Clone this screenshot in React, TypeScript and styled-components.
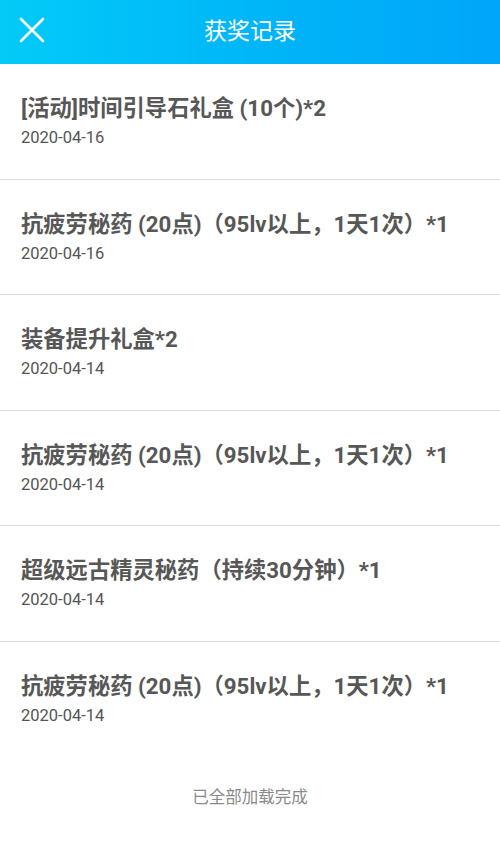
import React from 'react'
import styled, { createGlobalStyle } from 'styled-components'

const GlobalStyle = createGlobalStyle`
  html, body {
    margin: 0;
    padding: 0;
    background: #fff;
  }
  body {
    font-family: Roboto, "Noto Sans CJK SC", sans-serif;
  }
`

const records = [
  { name: '[活动]时间引导石礼盒 (10个)*2', date: '2020-04-16' },
  { name: '抗疲劳秘药 (20点)（95lv以上，1天1次）*1', date: '2020-04-16' },
  { name: '装备提升礼盒*2', date: '2020-04-14' },
  { name: '抗疲劳秘药 (20点)（95lv以上，1天1次）*1', date: '2020-04-14' },
  { name: '超级远古精灵秘药（持续30分钟）*1', date: '2020-04-14' },
  { name: '抗疲劳秘药 (20点)（95lv以上，1天1次）*1', date: '2020-04-14' },
]

export default function App() {
  return (
    <Page>
      <GlobalStyle />
      <Header>
        <CloseButton aria-label="close">
          <svg width="26" height="26" viewBox="0 0 26 26">
            <path d="M2 2 L24 24 M24 2 L2 24" stroke="#fff" strokeWidth="2.6" strokeLinecap="round" />
          </svg>
        </CloseButton>
        <Title>获奖记录</Title>
      </Header>
      <List>
        {records.map((r, i) => (
          <Row key={i} last={i === records.length - 1}>
            <ItemName>{r.name}</ItemName>
            <ItemDate>{r.date}</ItemDate>
          </Row>
        ))}
      </List>
      <Footer>已全部加载完成</Footer>
    </Page>
  )
}

const Page = styled.div`
  width: 500px;
  min-height: 846px;
  background: #fff;
`

const Header = styled.header`
  position: relative;
  height: 64px;
  display: flex;
  align-items: center;
  justify-content: center;
  background: linear-gradient(90deg, #02cbf8 0%, #00b6f8 50%, #00a6f9 100%);
`

const CloseButton = styled.button`
  position: absolute;
  left: 19px;
  top: 17px;
  width: 26px;
  height: 26px;
  padding: 0;
  border: 0;
  background: none;
  display: flex;
`

const Title = styled.h1`
  margin: 0;
  color: #fff;
  font-size: 23px;
  font-weight: 400;
  margin-top: -6px;
`

const List = styled.div`
  display: flex;
  flex-direction: column;
`

const Row = styled.div<{ last?: boolean }>`
  height: 115.5px;
  box-sizing: border-box;
  padding: 29px 21px 0;
  border-bottom: ${p => (p.last ? '1px solid transparent' : '1.5px solid #dcdcdc')};
  display: flex;
  flex-direction: column;
`

const ItemName = styled.div`
  font-size: 22.3px;
  line-height: 30px;
  font-weight: 700;
  color: #575757;
`

const ItemDate = styled.div`
  margin-top: 5px;
  font-size: 16.5px;
  line-height: 20px;
  color: #555;
`

const Footer = styled.div`
  padding-top: 30px;
  text-align: center;
  font-size: 16.5px;
  line-height: 22px;
  color: #8a8a8a;
`
